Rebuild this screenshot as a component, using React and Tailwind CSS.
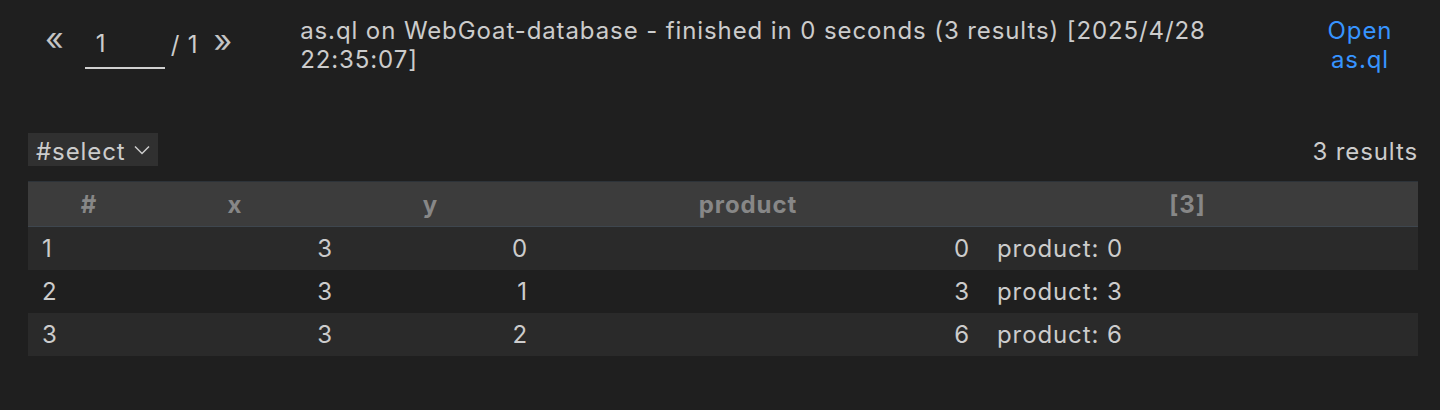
import React from "react";

const rows = [
  { n: 1, x: 3, y: 0, p: 0 },
  { n: 2, x: 3, y: 1, p: 3 },
  { n: 3, x: 3, y: 2, p: 6 },
];

export default function App() {
  return (
    <div className="min-h-[410px] w-[1440px] bg-[#1f1f1f] text-[#cccccc] font-['Inter',sans-serif] text-[24px] leading-[29px] tracking-[0.9px]">
      <div className="flex items-start pt-[16px] pl-[45px] pr-[44px]">
        <div className="flex items-center h-[50px] mt-[1px] tracking-normal">
          <button className="text-[32px] leading-none text-[#c4c4c4] pb-[6px]">«</button>
          <div className="self-start ml-[21px] w-[80px] h-[52px] border-b-2 border-[#d0d0d0] pl-[11px] pt-[12px] tracking-[0.9px]">1</div>
          <span className="ml-[6px] pt-[5px] tracking-[0.9px]">/ 1</span>
          <button className="ml-[15px] text-[32px] leading-none text-[#c4c4c4] pb-[2px]">»</button>
        </div>
        <div className="ml-[68px] w-[1000px]">
          as.ql on WebGoat-database - finished in 0 seconds (3 results) [2025/4/28 22:35:07]
        </div>
        <a className="ml-auto text-center text-[#3794ff] w-[72px]">Open as.ql</a>
      </div>

      <div className="mt-[59px] ml-[28px] mr-[22px] flex items-center justify-between">
        <div className="flex items-center h-[33px] bg-[#303030] pl-[8px] pr-[8px] gap-[8px]">
          <span className="pt-[3px]">#select</span>
          <svg width="16" height="10" viewBox="0 0 16 10" fill="none" stroke="#cccccc" strokeWidth="1.5" className="mt-[1px]">
            <polyline points="1,1.5 8,8.5 15,1.5" />
          </svg>
        </div>
        <span className="pt-[4px]">3 results</span>
      </div>

      <div className="mt-[15px] ml-[28px] mr-[22px] border-t border-[#2d3339]">
        <div className="grid grid-cols-[122px_196px_195px_442px_435px] h-[45px] items-center bg-[#3c3c3c] border-b border-[#3e464e] font-bold text-[#878787]">
          <div className="text-center">#</div>
          <div className="text-center pr-[26px]">x</div>
          <div className="text-center pr-[26px]">y</div>
          <div className="text-center pr-[28px]">product</div>
          <div className="text-center pr-[26px]">[3]</div>
        </div>
        {rows.map((r, i) => (
          <div
            key={r.n}
            className={
              "grid grid-cols-[122px_196px_195px_442px_435px] h-[43px] items-center " +
              (i % 2 === 0 ? "bg-[#2a2a2a]" : "bg-[#1f1f1f]")
            }
          >
            <div className="pl-[14px]">{r.n}</div>
            <div className="text-right pr-[13px]">{r.x}</div>
            <div className="text-right pr-[13px]">{r.y}</div>
            <div className="text-right pr-[13px]">{r.p}</div>
            <div className="pl-[14px]">product: {r.p}</div>
          </div>
        ))}
      </div>
    </div>
  );
}
